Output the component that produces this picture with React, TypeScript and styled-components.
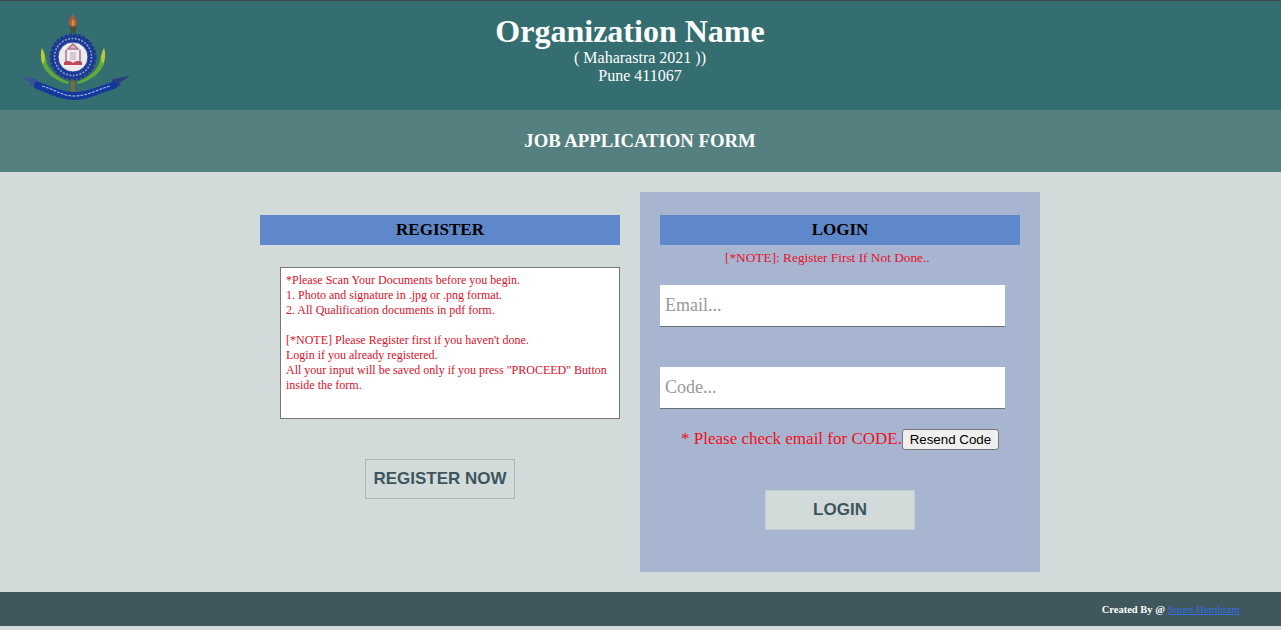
import React from 'react';
import styled, { createGlobalStyle } from 'styled-components';

const GlobalStyle = createGlobalStyle`
  html, body {
    margin: 0;
    padding: 0;
    background: #d2dbda;
    font-family: "Liberation Serif", "Times New Roman", serif;
  }
`;

// coordinates are page pixels, the crest sits at 20,13
const Logo = () => (
  <LogoSvg viewBox="20 13 110 87" aria-hidden="true">
    <path d="M42 50 C40 56 41 62 43 66 C47 74 56 81 68 84 L69 82 C58 78 50 71 47 64 C46 58 45 53 42 50 Z" fill="#62a83c" />
    <path d="M42 48 C40 53 41 60 43 64 C45 62 46 55 42 48 Z" fill="#b8cc3e" />
    <path d="M104 50 C106 56 105 62 103 66 C99 74 90 81 78 84 L77 82 C88 78 96 71 99 64 C100 58 101 53 104 50 Z" fill="#62a83c" />
    <path d="M104 48 C106 53 105 60 103 64 C101 62 100 55 104 48 Z" fill="#b8cc3e" />
    <rect x="71" y="78" width="4" height="16" fill="#7a6a3e" />
    <path d="M69 26 L77 26 L75 33 L71 33 Z" fill="#4a4f44" />
    <path d="M73 14 C70 18 68 21 69 24 C70 28 76 28 77 24 C78 21 75 18 73 14 Z" fill="#a85c3c" />
    <path d="M73 19 C72 21 71 22 72 25 C73 26 74 26 74.5 25 C75 22 74 21 73 19 Z" fill="#d89048" />
    <circle cx="73" cy="57" r="22" fill="#1a3a94" stroke="#1a3a94" strokeWidth="3" strokeDasharray="3 1.5" />
    <circle cx="73" cy="57" r="18.5" fill="none" stroke="#8a9ccc" strokeWidth="1.6" strokeDasharray="2 1.4" />
    <circle cx="73" cy="57" r="15" fill="#eeeaf0" stroke="#2a4aa0" />
    <path d="M66 50 L66 63 M80 50 L80 63 M68 49 L78 49 L73 44 Z" stroke="#a87c88" strokeWidth="1.6" fill="#d8b8c4" />
    <path d="M70 52 L76 52 L76 60 L70 60 Z" fill="#d8c8d0" />
    <path d="M64 62 C68 60 71 61 73 63 C75 61 78 60 82 62 L82 65 L64 65 Z" fill="#c04858" />
    <path d="M20 76 L37 79 L40 87 L29 86 L31 83 Z" fill="#3c5496" />
    <path d="M130 76 L113 79 L110 87 L121 86 L119 83 Z" fill="#2a3c80" />
    <path d="M35 81 C50 85 60 92 74 92 C90 92 100 85 116 81 L117 88 C102 92 90 100 74 100 C60 100 48 93 34 88 Z" fill="#14389c" />
    <path d="M42 86 C54 89 62 96 74 96 C88 96 98 89 110 86" fill="none" stroke="#a8b8e0" strokeWidth="1.1" strokeDasharray="3 1" />
  </LogoSvg>
);

const App = () => {
  return (
    <>
      <GlobalStyle />
      <Header>
        <Logo />
        <OrgName>Organization Name</OrgName>
        <OrgLine>( Maharastra 2021 ))</OrgLine>
        <OrgLine>Pune 411067</OrgLine>
      </Header>
      <SubHeader>JOB APPLICATION FORM</SubHeader>

      <Main>
        <Column>
          <BarTitle>REGISTER</BarTitle>
          <InfoBox>
            *Please Scan Your Documents before you begin.
            <br />
            1. Photo and signature in .jpg or .png format.
            <br />
            2. All Qualification documents in pdf form.
            <br />
            <br />
            [*NOTE] Please Register first if you haven't done.
            <br />
            Login if you already registered.
            <br />
            All your input will be saved only if you press "PROCEED" Button inside the form.
          </InfoBox>
          <RegisterButton>REGISTER NOW</RegisterButton>
        </Column>

        <LoginColumn>
          <BarTitle>LOGIN</BarTitle>
          <Note>[*NOTE]: Register First If Not Done..</Note>
          <EmailInput type="text" placeholder="Email..." />
          <TextInput type="text" placeholder="Code..." />
          <CodeRow>
            <CodeHint>* Please check email for CODE.</CodeHint>
            <ResendButton>Resend Code</ResendButton>
          </CodeRow>
          <LoginButton>LOGIN</LoginButton>
        </LoginColumn>
      </Main>

      <Footer>
        Created By @&nbsp;<FooterLink href="#">Suren Hembram</FooterLink>
      </Footer>
    </>
  );
};

export default App;

const Header = styled.header`
  position: relative;
  box-sizing: border-box;
  height: 110px;
  padding: 12px 1px 0 0;
  border-top: 1px solid #3a4a4c;
  background: #346e70;
  color: #fff;
  text-align: center;
`;

const LogoSvg = styled.svg`
  position: absolute;
  left: 20px;
  top: 12px;
  width: 110px;
  height: 87px;
  filter: blur(0.4px);
`;

const OrgName = styled.div`
  padding-right: 20px;
  font-size: 32px;
  font-weight: 700;
  line-height: 36px;
`;

const OrgLine = styled.div`
  font-size: 16px;
  line-height: 18px;
`;

const SubHeader = styled.div`
  height: 62px;
  padding-right: 1px;
  background: #558080;
  color: #fff;
  font-size: 18.72px;
  font-weight: 700;
  line-height: 62px;
  text-align: center;
`;

const Main = styled.main`
  display: flex;
  justify-content: center;
  padding: 20px 1px 20px 0;
  background: #d2dbda;
`;

const Column = styled.section`
  display: flex;
  flex-direction: column;
  align-items: flex-start;
  box-sizing: border-box;
  width: 400px;
  height: 380px;
  padding: 23px 20px 0;
`;

const LoginColumn = styled(Column)`
  background: #a7b5d0;
`;

const BarTitle = styled.div`
  width: 360px;
  height: 30px;
  background: #5f88ca;
  color: #000;
  font-size: 17px;
  font-weight: 700;
  line-height: 29px;
  text-align: center;
`;

const InfoBox = styled.div`
  box-sizing: border-box;
  width: 340px;
  height: 152px;
  margin: 22px 0 0 20px;
  padding: 5px;
  border: 1px solid #777;
  background: #fff;
  color: #d8102a;
  font-size: 12px;
  line-height: 15px;
`;

const ActionButton = styled.button`
  box-sizing: border-box;
  width: 150px;
  height: 40px;
  margin: 40px 0 0 105px;
  padding: 0;
  background: #d2dbda;
  color: #3d565e;
  font-family: "Liberation Sans", Arial, sans-serif;
  font-size: 17px;
  font-weight: 700;
  white-space: nowrap;
`;

const RegisterButton = styled(ActionButton)`
  border: 1px solid #aab5b8;
`;

const LoginButton = styled(ActionButton)`
  border: 1px solid #c3cdd2;
`;

const Note = styled.div`
  padding: 5px 0 0 65px;
  color: #e8102e;
  font-size: 13.33px;
  line-height: 15px;
`;

const TextInput = styled.input`
  box-sizing: border-box;
  width: 345px;
  height: 42px;
  margin-bottom: 20px;
  padding: 0 5px;
  border: none;
  border-bottom: 1px solid #6b7077;
  border-radius: 0;
  outline: none;
  background: #fff;
  font-family: "Liberation Serif", "Times New Roman", serif;
  font-size: 18px;

  &::placeholder {
    color: #999;
  }
`;

const EmailInput = styled(TextInput)`
  margin: 20px 0 40px;
`;

const CodeRow = styled.div`
  display: flex;
  align-items: center;
  margin-left: 21px;
`;

const CodeHint = styled.span`
  color: #f01020;
  font-size: 17px;
  line-height: 20px;
  margin-top: -2px;
`;

const ResendButton = styled.button`
  box-sizing: border-box;
  width: 97px;
  height: 21px;
  padding: 0;
  border: 1px solid #767676;
  border-radius: 3px;
  background: #efefef;
  color: #000;
  font-family: "Liberation Sans", Arial, sans-serif;
  font-size: 13.33px;
`;

const Footer = styled.footer`
  display: flex;
  justify-content: flex-end;
  align-items: center;
  box-sizing: border-box;
  height: 34px;
  padding-right: 41px;
  background: #40575d;
  color: #fff;
  font-size: 10.5px;
  font-weight: 700;
`;

const FooterLink = styled.a`
  color: #2f6fe0;
  font-size: 11px;
  font-weight: 400;
`;
